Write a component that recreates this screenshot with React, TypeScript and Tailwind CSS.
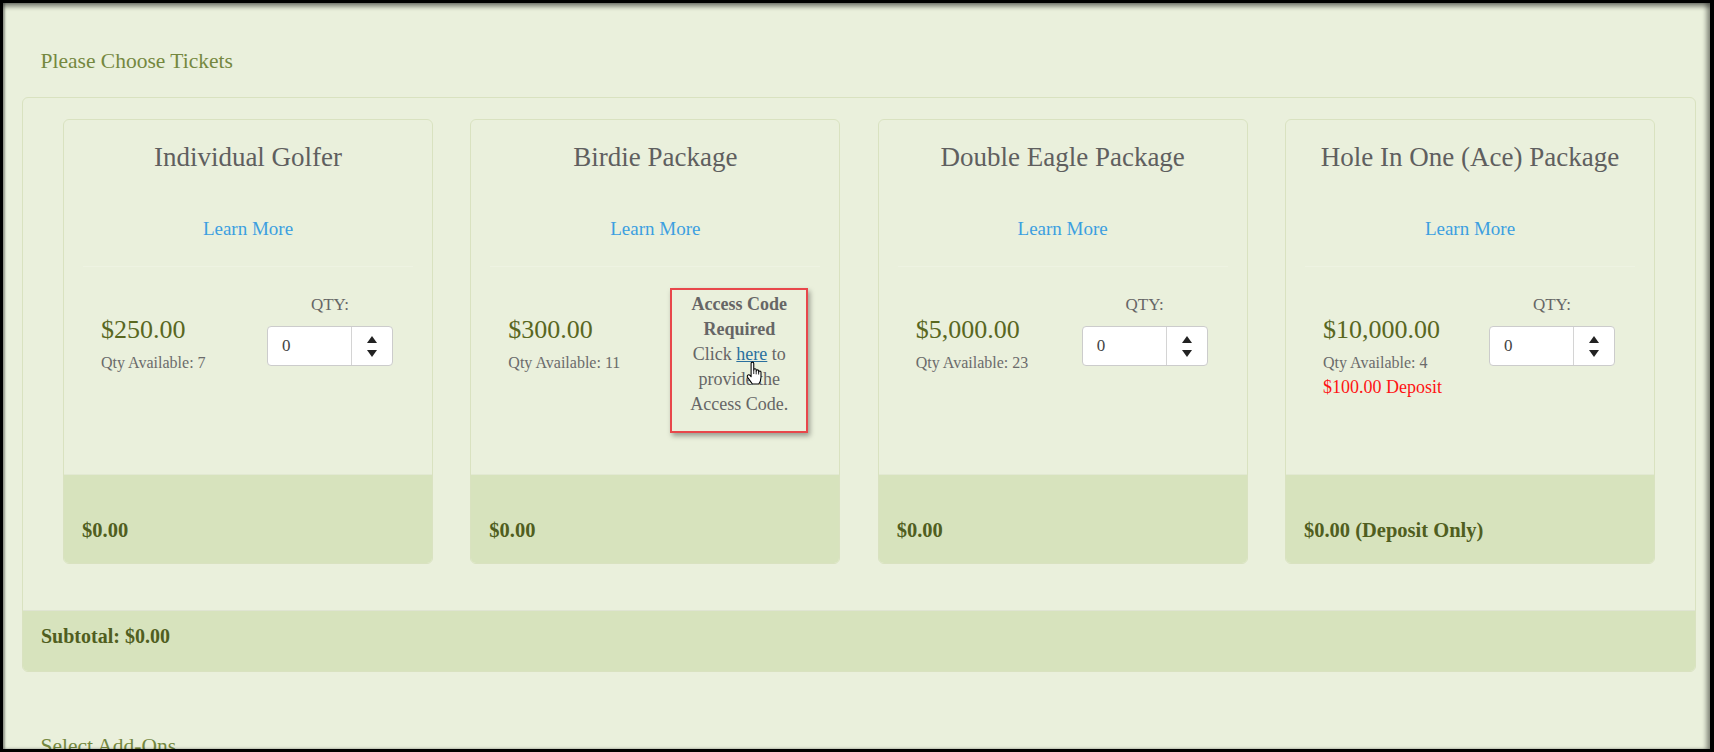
import React from "react";

const serif = { fontFamily: '"Liberation Serif", "Times New Roman", serif' };

function Spinner() {
  return (
    <div className="flex h-[40px] w-[126px] rounded-[4px] border border-[#cccccc] bg-white">
      <div className="flex flex-1 items-center pl-[14px] text-[17px] text-[#444]">0</div>
      <div className="flex w-[41px] flex-col items-center justify-center gap-[7px] border-l border-[#d4d4d4]">
        <svg width="10" height="7" viewBox="0 0 10 7">
          <path d="M5 0 L10 7 L0 7 Z" fill="#222" />
        </svg>
        <svg width="10" height="7" viewBox="0 0 10 7">
          <path d="M0 0 L10 0 L5 7 Z" fill="#222" />
        </svg>
      </div>
    </div>
  );
}

function Qty() {
  return (
    <div className="flex w-[126px] flex-col items-center pt-[27px]">
      <div className="text-[17px] leading-[22px] text-[#666]">QTY:</div>
      <div className="mt-[10px]">
        <Spinner />
      </div>
    </div>
  );
}

function HandCursor() {
  return (
    <svg
      className="pointer-events-none absolute left-[10px] top-[17px] z-20"
      width="17"
      height="25"
      viewBox="0 0 16 22"
    >
      <path
        d="M4.8 1.6 C4.8 0.8 5.4 0.3 6.1 0.3 C6.8 0.3 7.3 0.8 7.3 1.6 V7.6 C7.3 6.9 7.9 6.5 8.5 6.5 C9.1 6.5 9.6 6.9 9.6 7.6 V8.6 C9.6 8 10.2 7.6 10.8 7.6 C11.4 7.6 11.9 8 11.9 8.6 V9.6 C11.9 9 12.4 8.7 13 8.7 C13.6 8.7 14.1 9.1 14.1 9.7 V14.5 C14.1 17 13 19.4 12 20.9 H6 C5 19.4 3.2 17 1.5 14.6 C0.9 13.7 1.2 12.6 2 12.3 C2.8 12 3.5 12.4 4 13 L4.8 14.1 Z"
        fill="#fff"
        stroke="#000"
        strokeWidth="1"
        strokeLinejoin="round"
      />
      <path d="M7.3 7.6 V11.5 M9.6 8.6 V11.8 M11.9 9.6 V12" stroke="#000" strokeWidth="0.8" />
    </svg>
  );
}

function AccessBox() {
  return (
    <div className="mr-[-8px] mt-[21px] flex h-[145px] w-[138px] flex-col items-center border-2 border-[#e8474b] pt-[2px] text-center text-[18px] leading-[25px] text-[#666] shadow-[2px_3px_5px_rgba(0,0,0,0.35)]">
      <div className="font-bold">Access Code</div>
      <div className="font-bold">Required</div>
      <div>
        Click{" "}
        <span className="relative text-[#2a6f9e] underline">
          here
          <HandCursor />
        </span>{" "}
        to
      </div>
      <div>provide the</div>
      <div>Access Code.</div>
    </div>
  );
}

type Card = {
  title: string;
  price: string;
  avail: string;
  deposit?: string;
  access?: boolean;
  footer: string;
};

const cards: Card[] = [
  { title: "Individual Golfer", price: "$250.00", avail: "Qty Available: 7", footer: "$0.00" },
  { title: "Birdie Package", price: "$300.00", avail: "Qty Available: 11", access: true, footer: "$0.00" },
  { title: "Double Eagle Package", price: "$5,000.00", avail: "Qty Available: 23", footer: "$0.00" },
  {
    title: "Hole In One (Ace) Package",
    price: "$10,000.00",
    avail: "Qty Available: 4",
    deposit: "$100.00 Deposit",
    footer: "$0.00 (Deposit Only)",
  },
];

function TicketCard({ c }: { c: Card }) {
  return (
    <div className="flex h-[445px] w-[370px] flex-col overflow-hidden rounded-[6px] border border-[#d9e2c0]">
      <div className="flex flex-1 flex-col">
        <div className="pt-[21px] text-center text-[27px] leading-[32px] text-[#5f5f5f]">{c.title}</div>
        <div className="mt-[44px] text-center text-[19px] leading-[24px] text-[#3c9fe0]">Learn More</div>
        <div className="mx-[19px] mt-[25px] border-t border-[#eef3e2]" />
        <div className="flex justify-between pl-[37px] pr-[39px]">
          <div className="flex flex-col pt-[48px]">
            <div className="text-[26px] leading-[30px] text-[#59671f]">{c.price}</div>
            <div className="mt-[8px] text-[16px] leading-[20px] text-[#6b6b6b]">{c.avail}</div>
            {c.deposit && (
              <div className="mt-[3px] text-[18px] leading-[22px] text-[#ff1414]">{c.deposit}</div>
            )}
          </div>
          {c.access ? <AccessBox /> : <Qty />}
        </div>
      </div>
      <div className="flex h-[89px] items-end border-t border-[#e2e9d2] bg-[#d7e3bd] px-[18px] pb-[21px]">
        <div className="text-[20.5px] font-bold leading-[24px] text-[#505e20]">{c.footer}</div>
      </div>
    </div>
  );
}

export default function App() {
  return (
    <div className="h-[752px] w-[1714px] bg-black pb-[3px] pl-[3px] pr-[4px] pt-[3px]" style={serif}>
      <div className="relative h-full w-full overflow-hidden bg-[#eaf0dc]">
        <div className="pointer-events-none absolute inset-0 z-10 shadow-[inset_0_5px_4px_-1px_rgba(0,0,0,0.4),inset_2px_0_2px_rgba(0,0,0,0.3),inset_-5px_0_4px_-1px_rgba(0,0,0,0.35)]" />
        <div className="pl-[37.5px] pt-[44px] text-[21.5px] leading-[28px] text-[#75883f]">Please Choose Tickets</div>
        <div className="ml-[19px] mr-[14px] mt-[22px] overflow-hidden rounded-[6px] border border-[#d9e2c0]">
          <div className="flex justify-between px-[40px] pb-[46px] pt-[21px]">
            {cards.map((c) => (
              <TicketCard key={c.title} c={c} />
            ))}
          </div>
          <div className="flex h-[61px] items-start border-t border-[#dfe4d2] bg-[#d7e3bd] px-[18px] pt-[13px]">
            <div className="text-[20px] font-bold leading-[24px] text-[#505e20]">Subtotal: $0.00</div>
          </div>
        </div>
        <div className="pl-[37.5px] pt-[60px] text-[21.5px] leading-[28px] text-[#75883f]">Select Add-Ons</div>
      </div>
    </div>
  );
}
